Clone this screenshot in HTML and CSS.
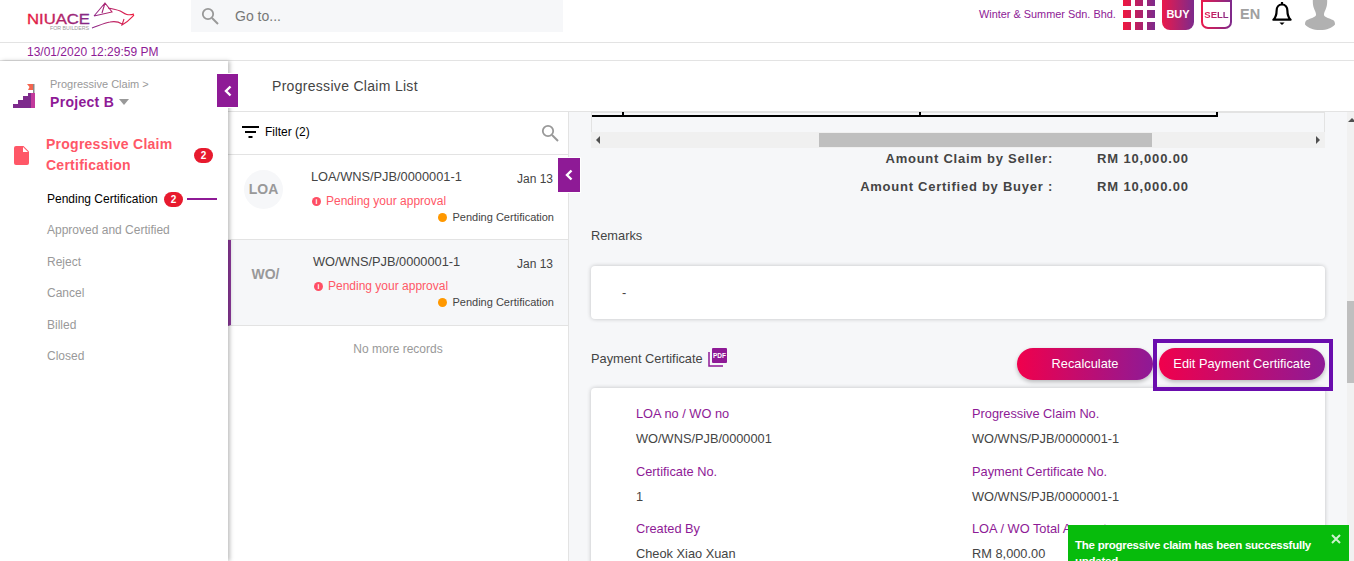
FILE: index.html
```html
<!DOCTYPE html>
<html lang="en">
  <head>
    <meta charset="UTF-8" />
    <meta name="viewport" content="width=device-width, initial-scale=1.0" />
    <title>Progressive Claim List</title>
    <link rel="stylesheet" href="styles.css">
  </head>
  <body>
    <svg class="defs" width="0" height="0">
      <defs>
        <linearGradient id="brand" x1="0" y1="0" x2="1" y2="0">
          <stop offset="0" stop-color="#f0173f" />
          <stop offset="1" stop-color="#7d2a8c" />
        </linearGradient>
        <linearGradient id="logoText" gradientUnits="userSpaceOnUse" x1="27" y1="0" x2="90" y2="0">
          <stop offset="0" stop-color="#ee1c3e" />
          <stop offset="1" stop-color="#7d2a8c" />
        </linearGradient>
        <linearGradient id="logoHorse" gradientUnits="userSpaceOnUse" x1="92" y1="0" x2="134" y2="0">
          <stop offset="0" stop-color="#8a2a8c" />
          <stop offset="1" stop-color="#ee1c3e" />
        </linearGradient>
      </defs>
    </svg>

    <header class="topbar">
      <svg class="logo" width="110" height="32" viewBox="25 0 110 32">
        <text x="27" y="24" class="logo-name" textLength="63" lengthAdjust="spacingAndGlyphs">NIUACE</text>
        <text x="50" y="30" class="logo-sub" textLength="39" lengthAdjust="spacingAndGlyphs">FOR BUILDERS</text>
        <path d="M94 16 105 3 112 12 94 16M105 3 102 13M108 8C113 9 119 10 122 12 125 14 128 16 134 14M134 15C131 18 128 22 122 25L124 19M92 28C98 26 104 23 110 22 115 21 119 22 122 24" fill="none" stroke="url(#logoHorse)" stroke-width="1.100" />
      </svg>
      <div class="goto">
        <svg width="18" height="18" viewBox="0 0 18 18"><circle cx="7" cy="7" r="5.200" fill="none" stroke="#999" stroke-width="1.800" /><path d="m11 11 6 6" stroke="#999" stroke-width="2" /></svg>
        <span>Go to...</span>
      </div>
      <div class="top-right">
        <span class="company">Winter &amp; Summer Sdn. Bhd.</span>
        <svg class="apps" width="32" height="30" viewBox="0 0 32 30">
          <path d="M0-2h8v8H0zM12-2h8v8h-8zM24-2h8v8h-8zM0 10h8v8H0zM12 10h8v8h-8zM24 10h8v8h-8zM0 22h8v8H0zM12 22h8v8h-8zM24 22h8v8h-8z" fill="url(#brand)" />
        </svg>
        <span class="buy">BUY</span>
        <span class="sell"><span>SELL</span></span>
        <span class="lang">EN</span>
        <svg class="bell" width="20" height="26" viewBox="0 0 20 26">
          <path d="M10 3.500c-3.600 0-5.400 2.800-5.400 6.200 0 4-.8 6.600-3.200 9h17.200c-2.400-2.400-3.200-5-3.200-9 0-3.400-1.800-6.200-5.400-6.200Z" fill="#fff" stroke="#000" stroke-width="2.200" stroke-linejoin="round" />
          <path d="M10 1v2.500" stroke="#000" stroke-width="2.200" />
          <path d="M7.400 21.500h5.200l-2.600 2.600Z" fill="#000" />
        </svg>
        <svg class="avatar" width="30" height="30" viewBox="0 0 30 30">
          <path d="M8-2h14c.6 5-.2 9-1.400 11.500-.8 2-1.800 3.500-1.600 5.500.2 2 5.500 3.500 9 5 1.500.7 2 2.500 2 4.500-3 3.500-8 5.500-15 5.500S3 28 0 24.500c0-2 .5-3.800 2-4.500 3.500-1.500 8.800-3 9-5 .2-2-.8-3.500-1.600-5.500C8.200 7 7.400 3 8-2Z" fill="#b1b1b1" />
        </svg>
      </div>
    </header>

    <div class="datebar">13/01/2020 12:29:59 PM</div>

    <div class="workspace">
      <aside class="sidebar">
        <div class="project">
          <svg width="24" height="26" viewBox="0 0 24 26">
            <path d="M1 26v-4h5v-4h5v-4h5v-3h3v15Z" fill="#7d2a8c" />
            <path d="M19 11h4v15h-4Z" fill="#c23a9c" />
            <path d="M21 2h1.500v9H21Z" fill="#888" />
            <path d="M15 2h6v6h-5l1.500-3Z" fill="#f4654f" />
          </svg>
          <div>
            <div class="crumb">Progressive Claim &gt;</div>
            <div class="project-name">Project B <i class="caret"></i></div>
          </div>
        </div>
        <button class="collapse collapse-side"><svg width="8" height="12" viewBox="0 0 8 12"><path d="M6.500 1.500 2 6l4.500 4.500" fill="none" stroke="#fff" stroke-width="2.400" /></svg></button>

        <div class="menu-head">
          <svg width="15" height="19" viewBox="0 0 15 19"><path d="M2 0h7.500L15 5.500V17a2 2 0 0 1-2 2H2a2 2 0 0 1-2-2V2a2 2 0 0 1 2-2Z" fill="#ff5767" /><path d="M9 1v5h5Z" fill="#fff" /></svg>
          <span class="menu-title">Progressive Claim Certification</span>
          <span class="badge">2</span>
        </div>
        <ul class="menu">
          <li class="active">Pending Certification <span class="badge">2</span><i class="active-line"></i></li>
          <li>Approved and Certified</li>
          <li>Reject</li>
          <li>Cancel</li>
          <li>Billed</li>
          <li>Closed</li>
        </ul>
      </aside>

      <div class="content">
        <div class="page-title">Progressive Claim List</div>
        <div class="panels">
          <section class="list">
            <button class="collapse collapse-list"><svg width="8" height="12" viewBox="0 0 8 12"><path d="M6.500 1.500 2 6l4.500 4.500" fill="none" stroke="#fff" stroke-width="2.400" /></svg></button>
            <div class="filter">
              <svg width="17" height="12" viewBox="0 0 17 12"><path d="M0 1h17M3 6h11M6.500 11h4" stroke="#000" stroke-width="2" /></svg>
              <span class="filter-label">Filter (2)</span>
              <svg class="filter-search" width="18" height="18" viewBox="0 0 18 18"><circle cx="7" cy="7" r="5.200" fill="none" stroke="#999" stroke-width="1.800" /><path d="m11 11 6 6" stroke="#999" stroke-width="2" /></svg>
            </div>

            <article class="claim">
              <div class="claim-type">LOA</div>
              <div class="claim-body">
                <div class="claim-top"><span class="claim-ref">LOA/WNS/PJB/0000001-1</span><span class="claim-date">Jan 13</span></div>
                <div class="claim-warn"><i class="info">i</i>Pending your approval</div>
                <div class="claim-status"><i class="dot"></i>Pending Certification</div>
              </div>
            </article>
            <article class="claim claim-selected">
              <div class="claim-type">WO/</div>
              <div class="claim-body">
                <div class="claim-top"><span class="claim-ref">WO/WNS/PJB/0000001-1</span><span class="claim-date">Jan 13</span></div>
                <div class="claim-warn"><i class="info">i</i>Pending your approval</div>
                <div class="claim-status"><i class="dot"></i>Pending Certification</div>
              </div>
            </article>
            <p class="no-more">No more records</p>
          </section>

          <main class="detail">
            <div class="table-end">
              <svg width="732" height="6" viewBox="0 0 732 6"><path d="M0 4h625M31 0v4M328 0v4M625 0v5" fill="none" stroke="#000" stroke-width="2" /></svg>
            </div>
            <div class="hscroll">
              <i class="arrow-left"></i>
              <div class="hscroll-track"><div class="hscroll-thumb"></div></div>
              <i class="arrow-right"></i>
            </div>

            <dl class="amounts">
              <dt>Amount Claim by Seller:</dt><dd>RM 10,000.00</dd>
              <dt>Amount Certified by Buyer :</dt><dd>RM 10,000.00</dd>
            </dl>

            <div class="section-label remarks-label">Remarks</div>
            <div class="card remarks">-</div>

            <div class="cert-head">
              <span class="section-label">Payment Certificate</span>
              <svg class="pdf" width="19" height="19" viewBox="0 0 19 19">
                <path d="M1 4v14h14" fill="none" stroke="#8e1a96" stroke-width="1.500" />
                <rect x="4" y="0" width="15" height="15" rx="1" fill="#8e1a96" />
                <text x="11.500" y="10" class="pdf-text" text-anchor="middle">PDF</text>
              </svg>
              <div class="cert-actions">
                <button class="btn">Recalculate</button>
                <div class="btn-marked"><button class="btn">Edit Payment Certificate</button></div>
              </div>
            </div>

            <div class="card cert-card">
              <div class="field"><div class="field-label">LOA no / WO no</div><div class="field-value">WO/WNS/PJB/0000001</div></div>
              <div class="field"><div class="field-label">Progressive Claim No.</div><div class="field-value">WO/WNS/PJB/0000001-1</div></div>
              <div class="field"><div class="field-label">Certificate No.</div><div class="field-value">1</div></div>
              <div class="field"><div class="field-label">Payment Certificate No.</div><div class="field-value">WO/WNS/PJB/0000001-1</div></div>
              <div class="field"><div class="field-label">Created By</div><div class="field-value">Cheok Xiao Xuan</div></div>
              <div class="field"><div class="field-label">LOA / WO Total Amount</div><div class="field-value">RM 8,000.00</div></div>
            </div>
          </main>

          <div class="vscroll">
            <i class="arrow-up"></i>
            <div class="vscroll-thumb"></div>
          </div>
        </div>
      </div>
    </div>

    <div class="toast">
      <span>The progressive claim has been successfully updated</span>
      <svg width="10" height="10" viewBox="0 0 10 10"><path d="m1 1 8 8M9 1 1 9" stroke="#fff" stroke-width="2" opacity=".8" /></svg>
    </div>
  </body>
</html>
```

FILE: styles.css
```css
* {
  box-sizing: border-box;
}

html,
body {
  height: 561px;
  overflow: hidden;
}

body {
  margin: 0;
  font-family: "Liberation Sans", Arial, sans-serif;
  font-size: 12px;
  color: #444;
  background-color: #fff;
  display: flex;
  flex-direction: column;
}

i {
  font-style: normal;
}

.defs {
  display: block;
  height: 0;
}

/* top bar */
.topbar {
  height: 43px;
  flex: none;
  display: flex;
  align-items: flex-start;
  padding-left: 25px;
  border-bottom: 1px solid #e3e3e3;
}

.logo {
  flex: none;
}

.logo-name {
  font-size: 14px;
  fill: url(#logoText);
  stroke: url(#logoText);
  stroke-width: 0.3px;
}

.logo-sub {
  font-size: 5px;
  fill: #999;
}

.goto {
  width: 372px;
  height: 32px;
  margin-left: 56px;
  padding-left: 10px;
  display: flex;
  align-items: center;
  gap: 16px;
  background-color: #f6f7f9;
  font-size: 14px;
  color: #777;
}

.top-right {
  flex: 1;
  height: 32px;
  display: flex;
  align-items: flex-start;
}

.company {
  margin-left: 416px;
  margin-top: 8px;
  width: 144px;
  font-size: 10.900px;
  white-space: nowrap;
  color: #8e1a96;
}

.apps {
  display: block;
}

.buy {
  width: 32px;
  height: 30px;
  margin-left: 7px;
  border-radius: 0 0 8px 8px;
  background: linear-gradient(90deg, #ea1a4b, #7d2a8c);
  color: #fff;
  font-weight: bold;
  font-size: 11px;
  line-height: 28px;
  text-align: center;
}

.sell {
  width: 31px;
  height: 29px;
  margin-left: 7px;
  border: 2px solid transparent;
  border-radius: 0 0 7px 7px;
  background: linear-gradient(#fff, #fff) padding-box, linear-gradient(90deg, #ea1a4b, #7d2a8c) border-box;
  font-size: 9.500px;
  font-weight: bold;
  line-height: 25px;
  text-align: center;
}

.sell span {
  background: linear-gradient(90deg, #ea1a4b, #7d2a8c);
  -webkit-background-clip: text;
  background-clip: text;
  color: transparent;
}

.lang {
  margin-left: 8px;
  margin-top: 6px;
  font-size: 14.500px;
  font-weight: bold;
  color: #a0a0a0;
}

.bell {
  display: block;
  margin-left: 12px;
  margin-top: 1px;
}

.avatar {
  display: block;
  margin-left: 13px;
}

/* date */
.datebar {
  height: 18px;
  flex: none;
  padding-left: 27px;
  line-height: 18px;
  color: #8e1a96;
  border-bottom: 1px solid #e3e3e3;
}

.workspace {
  flex: 1;
  min-height: 0;
  display: flex;
}

/* sidebar */
.sidebar {
  position: relative;
  z-index: 2;
  width: 228px;
  flex: none;
  background-color: #fff;
  box-shadow: 2px 0 4px rgba(0, 0, 0, 0.25);
}

.project {
  height: 50px;
  padding: 17px 0 0 12px;
  display: flex;
  gap: 14px;
}

.project > svg {
  margin-top: 4px;
}

.crumb {
  font-size: 11px;
  color: #999;
  line-height: 13px;
}

.project-name {
  margin-top: 3px;
  font-size: 14px;
  font-weight: bold;
  letter-spacing: 0.3px;
  color: #8e1a96;
  display: flex;
  align-items: center;
  gap: 5px;
}

.caret {
  width: 0;
  height: 0;
  border: 5.500px solid transparent;
  border-top: 6px solid #999;
  border-bottom: 0;
}

.collapse {
  position: absolute;
  padding: 0;
  border: 1px solid #fff;
  background-color: #8e1a96;
  display: flex;
  align-items: center;
  justify-content: center;
  z-index: 3;
}

.collapse-side {
  left: 216px;
  top: 12px;
  width: 23px;
  height: 35px;
}

.collapse-list {
  left: 329px;
  top: 45px;
  width: 24px;
  height: 36px;
}

.menu-head {
  margin-top: 23px;
  padding: 0 15px 0 14px;
  display: flex;
  align-items: center;
}

.menu-head > svg {
  flex: none;
}

.menu-title {
  width: 148px;
  margin-left: 17px;
  font-size: 14px;
  font-weight: bold;
  line-height: 21px;
  letter-spacing: 0.25px;
  color: #ff5767;
}

.badge {
  display: inline-block;
  width: 19px;
  height: 15px;
  border-radius: 8px;
  background-color: #e71a2e;
  color: #fff;
  font-size: 10px;
  font-weight: bold;
  line-height: 15px;
  text-align: center;
}

.menu {
  list-style: none;
  margin: 16px 0 0;
  padding: 0 0 0 47px;
}

.menu li {
  height: 31.400px;
  display: flex;
  align-items: flex-start;
  line-height: 14px;
  white-space: pre;
  color: #999;
}

.menu .active {
  color: #000;
}

.menu .badge {
  margin-left: 3px;
}

.active-line {
  width: 30px;
  height: 2px;
  margin: 6px 0 0 4px;
  background-color: #8e1a96;
}

/* content */
.content {
  flex: 1;
  min-width: 0;
  display: flex;
  flex-direction: column;
}

.page-title {
  height: 51px;
  flex: none;
  padding: 17px 0 0 44px;
  font-size: 14px;
  letter-spacing: 0.3px;
  border-bottom: 1px solid #e3e3e3;
}

.panels {
  flex: 1;
  min-height: 0;
  display: flex;
}

/* claim list */
.list {
  position: relative;
  width: 341px;
  flex: none;
  border-right: 1px solid #e3e3e3;
}

.filter {
  height: 43px;
  padding: 0 9px 2px 14px;
  display: flex;
  align-items: center;
  border-bottom: 1px solid #e3e3e3;
}

.filter-label {
  margin-left: 6px;
  color: #000;
}

.filter-search {
  margin-left: auto;
  margin-top: 2px;
}

.claim {
  height: 85px;
  padding: 0 14px 0 16px;
  display: flex;
  border-bottom: 1px solid #e3e3e3;
}

.claim-selected {
  height: 86px;
  padding-left: 15px;
  border-left: 3px solid #8e3a9c;
  background-color: #f6f7f9;
}

.claim-type {
  width: 39px;
  height: 39px;
  margin-top: 15px;
  border-radius: 50%;
  background-color: #f6f7f9;
  font-size: 14px;
  font-weight: bold;
  line-height: 39px;
  text-align: center;
  color: #999;
  flex: none;
}

.claim-body {
  flex: 1;
  margin-left: 28px;
  padding-top: 15px;
}

.claim-ref {
  font-size: 12.800px;
}

.claim-top {
  display: flex;
  justify-content: space-between;
  line-height: 14px;
}

.claim-date {
  margin-top: 2px;
  margin-right: 1px;
}

.claim-warn {
  margin-top: 8px;
  display: flex;
  align-items: center;
  gap: 5px;
  line-height: 14px;
  color: #ff5767;
}

.info {
  width: 9px;
  height: 9px;
  margin-left: 1px;
  border-radius: 50%;
  background-color: #ff4f64;
  color: #fff;
  font-size: 7px;
  font-weight: bold;
  line-height: 9px;
  text-align: center;
}

.claim-status {
  margin-top: 2px;
  display: flex;
  justify-content: flex-end;
  align-items: center;
  gap: 5px;
  font-size: 11px;
  line-height: 14px;
}

.dot {
  width: 9px;
  height: 9px;
  border-radius: 50%;
  background-color: #ff9800;
}

.no-more {
  margin: 16px 0 0;
  text-align: center;
  color: #999;
}

/* detail */
.detail {
  flex: 1;
  min-width: 0;
  overflow: hidden;
  padding: 0 22px;
  background-color: #f6f7f9;
  font-size: 12.800px;
}

.table-end {
  height: 20px;
  border: 1px solid #e3e3e3;
  border-top: 0;
  border-bottom: 0;
  box-shadow: inset 0 6px 0 -5px #e3e3e3;
  overflow: hidden;
}

.table-end svg {
  display: block;
}

.hscroll {
  height: 16px;
  padding: 0 5px;
  display: flex;
  align-items: center;
  gap: 5px;
  background-color: #f0f0f0;
}

.hscroll-track {
  flex: 1;
  height: 14px;
}

.hscroll-thumb {
  width: 333px;
  height: 14px;
  margin-left: 214px;
  background-color: #bfbfbf;
}

.arrow-left,
.arrow-right,
.arrow-up {
  width: 0;
  height: 0;
  border: 4px solid transparent;
}

.arrow-left {
  border-left: 0;
  border-right-color: #505050;
}

.arrow-right {
  border-right: 0;
  border-left-color: #505050;
}

.amounts {
  margin: 3px 0 0;
  display: grid;
  grid-template-columns: 462px auto;
  column-gap: 44px;
  row-gap: 13px;
  font-size: 13px;
  font-weight: bold;
  line-height: 15px;
  letter-spacing: 0.75px;
}

.amounts dt {
  text-align: right;
}

.amounts dd {
  margin: 0;
  letter-spacing: 0.85px;
}

.section-label {
  font-size: 12.800px;
}

.remarks-label {
  margin-top: 35px;
  line-height: 14px;
}

.card {
  background-color: #fff;
  border-radius: 4px;
  box-shadow: 0 0 4px rgba(0, 0, 0, 0.22);
}

.remarks {
  height: 53px;
  margin-top: 23px;
  padding: 19px 0 0 31px;
}

.cert-head {
  height: 69px;
  display: flex;
  align-items: flex-start;
  padding-top: 29px;
}

.cert-head .section-label {
  margin-top: 3px;
}

.pdf {
  margin-left: 5px;
}

.pdf-text {
  font-size: 6.500px;
  font-weight: bold;
  fill: #fff;
}

.cert-actions {
  margin-left: auto;
  margin-right: -8px;
  display: flex;
  align-items: flex-start;
}

.btn {
  height: 32px;
  width: 136px;
  padding: 0;
  border: 0;
  border-radius: 16px;
  background: linear-gradient(90deg, #f0004c, #8e1a96);
  box-shadow: 0 2px 4px rgba(0, 0, 0, 0.25);
  color: #fff;
  font-family: inherit;
  font-size: 12.800px;
  line-height: 32px;
}

.btn-marked {
  margin-top: -9px;
  padding: 5px 4px 7px 2px;
  border: 4px solid #6a0dad;
}

.btn-marked .btn {
  width: 166px;
}

.cert-card {
  display: grid;
  grid-template-columns: 336px 1fr;
  padding: 19px 0 40px 45px;
}

.field {
  height: 57.500px;
  line-height: 14px;
}

.field-label {
  color: #8e1a96;
}

.field-value {
  margin-top: 11px;
}

/* right scrollbar */
.vscroll {
  width: 7px;
  flex: none;
  background-color: #f1f1f1;
  display: flex;
  flex-direction: column;
}

.arrow-up {
  margin: 6px 0 0 1px;
  border-top: 0;
  border-bottom-color: #505050;
}

.vscroll-thumb {
  height: 82px;
  margin-top: 179px;
  background-color: #bfbfbf;
}

/* toast */
.toast {
  position: absolute;
  left: 1068px;
  top: 525px;
  width: 281px;
  height: 56px;
  padding: 12px 8px 0 7px;
  display: flex;
  align-items: flex-start;
  justify-content: space-between;
  background-color: #07bc0c;
  color: #fff;
  font-size: 11.500px;
  font-weight: bold;
  line-height: 16px;
}

.toast span {
  width: 244px;
  letter-spacing: -0.25px;
}

.toast svg {
  flex: none;
  margin-top: -3px;
}
```
